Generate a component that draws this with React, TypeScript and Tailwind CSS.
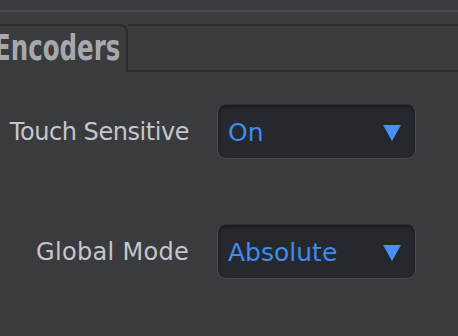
import React from "react";

const font = { fontFamily: '"DejaVu Sans", "Liberation Sans", sans-serif' };

function Dropdown({ value }: { value: string }) {
  return (
    <div className="flex h-[55px] w-[199px] items-center justify-between rounded-[9px] border-[1.5px] border-[#4a4c50] border-t-[#2e3034] bg-[#25282c] pl-[10px] pr-[14px] shadow-[inset_0_2px_3px_rgba(0,0,0,0.35)]">
      <span className="translate-y-[1px] text-[25px] leading-none text-[#3f8bf0]">{value}</span>
      <svg width="18" height="16" viewBox="0 0 18 16" className="translate-y-[1px]">
        <polygon points="0,0 18,0 9,16" fill="#4a8ff5" />
      </svg>
    </div>
  );
}

function Row({ label, value, tracking }: { label: string; value: string; tracking: string }) {
  return (
    <div className="flex items-center">
      <div className={`w-[189px] whitespace-nowrap text-right text-[24px] leading-none text-[#c6c6ca] ${tracking}`}>{label}</div>
      <div className="ml-[28px]">
        <Dropdown value={value} />
      </div>
    </div>
  );
}

export default function App() {
  return (
    <div className="flex h-[336px] w-[458px] flex-col overflow-hidden bg-[#3a3b3f]" style={font}>
      <div className="h-[10px]" />
      <div className="h-[2px] bg-[#4a4b52]" />
      <div className="h-[12px]" />
      <div className="flex h-[48px]">
        <div className="relative h-[48px] w-[128px] overflow-hidden rounded-tr-[8px] border-r-2 border-t-2 border-[#2a2b2e]">
          <span className="absolute left-[-6px] top-[5px] origin-left scale-x-[0.7] whitespace-nowrap text-[35px] font-bold leading-none text-[#a8a8ac]">
            Encoders
          </span>
        </div>
        <div className="flex-1 border-b-2 border-t-2 border-[#2a2b2e]" />
      </div>
      <div className="flex flex-col gap-[65px] pt-[32px]">
        <Row label="Touch Sensitive" value="On" tracking="tracking-[-0.45px]" />
        <Row label="Global Mode" value="Absolute" tracking="tracking-[0.3px]" />
      </div>
    </div>
  );
}
